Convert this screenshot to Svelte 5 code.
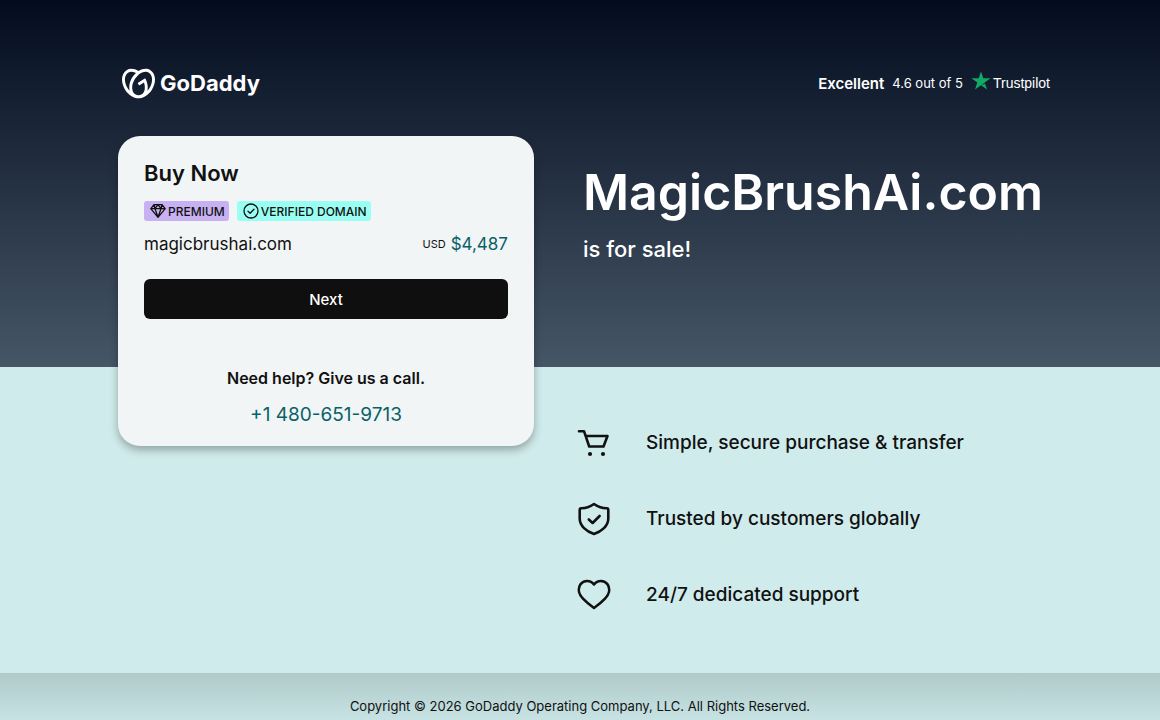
<script lang="ts">
	const domain = 'MagicBrushAi.com';
	const price = '$4,487';
	const phone = '+1 480-651-9713';
	const benefits = [
		{ icon: 'cart', text: 'Simple, secure purchase & transfer' },
		{ icon: 'shield', text: 'Trusted by customers globally' },
		{ icon: 'heart', text: '24/7 dedicated support' }
	];
</script>

<div class="page">
	<main class="lander">
		<div class="band band-hero"></div>
		<div class="band band-benefits"></div>

		<header class="header">
			<a class="logo" href="/" aria-label="GoDaddy">
				<svg class="logo-mark" viewBox="0 0 24 24" aria-hidden="true">
					<path d="M20.702 2.29c-2.494-1.554-5.778-1.187-8.706.654C9.076 1.104 5.79.736 3.3 2.29c-3.941 2.463-4.42 8.806-1.07 14.167 2.47 3.954 6.333 6.269 9.77 6.226 3.439.043 7.301-2.273 9.771-6.226 3.347-5.361 2.872-11.704-1.069-14.167zM4.042 15.328a12.838 12.838 0 01-1.546-3.541 10.12 10.12 0 01-.336-3.338c.15-1.98.956-3.524 2.27-4.345 1.315-.822 3.052-.87 4.903-.137.281.113.556.24.825.382A15.11 15.11 0 007.5 7.54c-2.035 3.255-2.655 6.878-1.945 9.765a13.247 13.247 0 01-1.514-1.98zm17.465-3.541a12.866 12.866 0 01-1.547 3.54 13.25 13.25 0 01-1.513 1.984c.635-2.589.203-5.76-1.353-8.734a.39.39 0 00-.563-.153l-4.852 3.032a.397.397 0 00-.126.546l.712 1.139a.395.395 0 00.547.126l3.145-1.965c.101.306.203.606.28.916.296 1.086.41 2.214.335 3.337-.15 1.982-.956 3.525-2.27 4.347a4.437 4.437 0 01-2.25.65h-.101a4.432 4.432 0 01-2.25-.65c-1.314-.822-2.121-2.365-2.27-4.347-.074-1.123.039-2.251.335-3.337a13.212 13.212 0 014.05-6.482 10.148 10.148 0 012.849-1.765c1.845-.733 3.586-.685 4.9.137 1.316.822 2.122 2.365 2.271 4.345a10.146 10.146 0 01-.33 3.334z" />
				</svg>
				<span class="logo-text">GoDaddy</span>
			</a>
			<div class="rating">
				<strong>Excellent</strong>
				<span class="score">4.6 out of 5</span>
				<a class="trustpilot" href="/reviews">
					<svg viewBox="0 0 20 20" aria-hidden="true">
						<path d="M10 0.5 12.3 7.3H19.6L13.7 11.6 16 18.5 10 14.3 4 18.5 6.3 11.6 0.4 7.3H7.7z" fill="#12a866" />
						<path d="M14.2 13 13.7 11.6 10 14.3z" fill="#075138" />
					</svg>
					<span>Trustpilot</span>
				</a>
			</div>
		</header>

		<section class="card">
			<h2>Buy Now</h2>
			<div class="tags">
				<span class="tag premium">
					<svg viewBox="0 0 16 16" aria-hidden="true">
						<path d="M4 1.7h8l3.2 4L8 14.3.8 5.7zM.8 5.7h14.4M5 5.7l3 8.6 3-8.6M4 1.7l1 4 3-4 3 4 1-4" />
					</svg>
					PREMIUM
				</span>
				<span class="tag verified">
					<svg viewBox="0 0 16 16" aria-hidden="true">
						<circle cx="8" cy="8" r="7" />
						<path d="M5 8.2 7.1 10.2 11 6.2" />
					</svg>
					VERIFIED DOMAIN
				</span>
			</div>
			<div class="price-row">
				<span class="name">{domain.toLowerCase()}</span>
				<span class="price"><small>USD</small>{price}</span>
			</div>
			<button type="button">Next</button>
			<p class="help">Need help? Give us a call.</p>
			<a class="phone" href="tel:+14806519713">{phone}</a>
		</section>

		<section class="headline">
			<h1>{domain}</h1>
			<p>is for sale!</p>
		</section>

		<ul class="benefits">
			{#each benefits as benefit (benefit.icon)}
				<li>
					<svg viewBox="0 0 34 34" aria-hidden="true">
						{#if benefit.icon === 'cart'}
							<path d="M2 5.2H7L12.2 20.5H26.5L30.5 10H8.6" />
							<circle class="wheel" cx="13" cy="28" r="2.1" />
							<circle class="wheel" cx="26" cy="28" r="2.1" />
						{:else if benefit.icon === 'shield'}
							<path d="M17 2C13 4.8 8 6.3 4.2 6.3Q2.7 6.4 2.7 8V16.5C2.7 24 9.5 29.5 17 32C24.5 29.5 31.3 24 31.3 16.5V8Q31.3 6.4 29.8 6.3C26 6.3 21 4.8 17 2Z" />
							<path d="M11.8 17.5 15.6 21 22.6 14" />
						{:else}
							<path d="M17 6.5C13.5 1.7 6.5 1.9 3.5 6.3C.2 11.2 2.3 16.8 6 20.7Q10.5 25.5 17 30Q23.5 25.5 28 20.7C31.7 16.8 33.8 11.2 30.5 6.3C27.5 1.9 20.5 1.7 17 6.5Z" />
						{/if}
					</svg>
					<span>{benefit.text}</span>
				</li>
			{/each}
		</ul>
	</main>

	<footer>Copyright © 2026 GoDaddy Operating Company, LLC. All Rights Reserved.</footer>
</div>

<style>
	:global(body) {
		margin: 0;
		background: #d0ebeb;
	}

	.page {
		display: flex;
		flex-direction: column;
		min-height: 100vh;
		font-family: Inter, 'Liberation Sans', sans-serif;
		color: #111;
	}

	h1,
	h2,
	p,
	ul {
		margin: 0;
		padding: 0;
	}

	a {
		color: inherit;
		text-decoration: none;
	}

	.lander {
		display: grid;
		grid-template-columns: minmax(16px, 1fr) minmax(0, 424px) minmax(0, 516px) minmax(16px, 1fr);
		grid-template-rows: 136px 231px auto;
	}

	.band {
		grid-column: 1 / -1;
	}

	.band-hero {
		grid-row: 1 / 3;
		background: linear-gradient(#030c1f, #465666);
	}

	.band-benefits {
		grid-row: 3;
		background: #d0ebeb;
	}

	.header {
		grid-column: 2 / 4;
		grid-row: 1;
		display: flex;
		align-items: center;
		justify-content: space-between;
		padding: 30px 0 0 12px;
		color: #fff;
	}

	.logo {
		display: flex;
		align-items: center;
		gap: 5px;
	}

	.logo-mark {
		width: 33px;
		height: 33px;
		fill: #fff;
	}

	.logo-text {
		font-size: 22px;
		font-weight: 700;
	}

	.rating {
		display: flex;
		align-items: center;
		gap: 8px;
		font-size: 13px;
	}

	.rating strong {
		font-size: 15px;
		font-weight: 600;
	}

	.trustpilot {
		display: flex;
		align-items: center;
		gap: 2px;
		font-family: 'Liberation Sans', Arial, sans-serif;
		font-size: 14px;
	}

	.trustpilot svg {
		width: 20px;
		height: 20px;
		margin-bottom: 4px;
	}

	.card {
		grid-column: 2;
		grid-row: 2 / 4;
		align-self: start;
		box-sizing: border-box;
		min-height: 310px;
		margin-left: 8px;
		padding: 20px 26px 16px;
		background: #f1f5f6;
		border-radius: 22px;
		box-shadow: 0 4px 8px rgba(0, 0, 0, 0.3);
		display: flex;
		flex-direction: column;
	}

	h2 {
		font-size: 22px;
		font-weight: 600;
		line-height: 34px;
	}

	.tags {
		display: flex;
		gap: 8px;
		margin-top: 11px;
	}

	.tag {
		display: flex;
		align-items: center;
		gap: 2px;
		height: 20px;
		padding: 0 4px 0 6px;
		border-radius: 3px;
		font-size: 12px;
		font-weight: 500;
	}

	.tag svg {
		width: 16px;
		height: 16px;
		fill: none;
		stroke: #111;
		stroke-width: 1.3;
		stroke-linecap: round;
		stroke-linejoin: round;
	}

	.premium {
		background: #c8b1f2;
	}

	.verified {
		background: #99fff3;
	}

	.price-row {
		display: flex;
		align-items: center;
		justify-content: space-between;
		margin-top: 10px;
		line-height: 26px;
	}

	.name {
		font-size: 17px;
	}

	.price {
		color: #096167;
		font-size: 17px;
		display: flex;
		align-items: center;
		gap: 5px;
	}

	.price small {
		color: #111;
		font-size: 11px;
	}

	button {
		height: 40px;
		flex-shrink: 0;
		margin-top: 22px;
		border: 0;
		border-radius: 6px;
		background: #0f0f0f;
		color: #fff;
		font-family: inherit;
		font-size: 15px;
		font-weight: 500;
	}

	.help {
		margin-top: 47px;
		font-size: 16px;
		font-weight: 600;
		line-height: 24px;
		text-align: center;
	}

	.phone {
		align-self: center;
		margin-top: 11px;
		color: #096167;
		font-size: 19px;
		line-height: 28px;
	}

	.headline {
		grid-column: 3;
		grid-row: 2;
		padding: 24px 0 0 49px;
		color: #fff;
	}

	h1 {
		font-size: 50px;
		font-weight: 600;
		line-height: 64px;
	}

	.headline p {
		margin-top: 9px;
		font-size: 22px;
		font-weight: 500;
		line-height: 32px;
	}

	.benefits {
		grid-column: 3;
		grid-row: 3;
		display: flex;
		flex-direction: column;
		gap: 42px;
		padding: 59px 0 61px 43px;
		list-style: none;
	}

	.benefits li {
		display: flex;
		align-items: center;
		gap: 35px;
		font-size: 19px;
		font-weight: 500;
		line-height: 34px;
	}

	.benefits svg {
		flex-shrink: 0;
		width: 34px;
		height: 34px;
		fill: none;
		stroke: #111;
		stroke-width: 2.6;
		stroke-linecap: round;
		stroke-linejoin: round;
	}

	.benefits .wheel {
		fill: #111;
		stroke: none;
	}

	footer {
		flex: 1;
		padding: 23px 16px 0;
		background: linear-gradient(#b0caca, #c6e2e2 47px);
		font-size: 13px;
		line-height: 20px;
		text-align: center;
	}
</style>
